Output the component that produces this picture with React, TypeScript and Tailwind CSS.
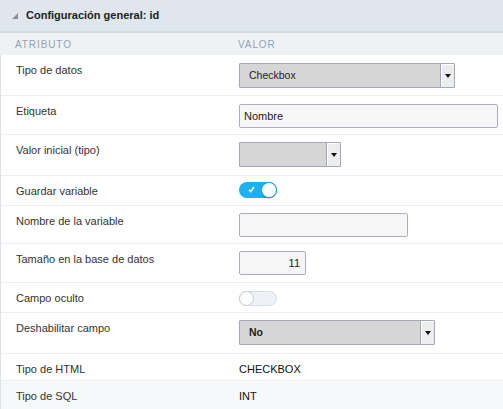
import React from "react";

const font = { fontFamily: '"Liberation Sans", Arial, sans-serif' };

function Select({ width, value, bold }: { width: number; value: string; bold?: boolean }) {
  return (
    <div
      className="flex h-[25px] border border-[#a2a9b5] bg-[#d6d6d6] rounded-[1px]"
      style={{ width }}
    >
      <div className={`flex-1 flex items-center pl-[9px] text-[10.5px] text-[#222] ${bold ? "font-bold" : ""}`}>
        {value}
      </div>
      <div className="w-[14px] border-l border-[#a2a9b5] bg-[#ededed] flex items-center justify-center shadow-[inset_1px_1px_0_#ffffff]">
        <div className="w-0 h-0 border-l-[3px] border-r-[3px] border-t-[4px] border-l-transparent border-r-transparent border-t-[#111]" />
      </div>
    </div>
  );
}

function Input({ width, value, right }: { width: number; value?: string; right?: boolean }) {
  return (
    <div
      className={`h-[24px] border border-[#a9b0bc] bg-[#f6f6f6] rounded-[2px] flex items-center text-[11px] text-[#222] ${right ? "justify-end pr-[5px]" : "pl-[4px]"}`}
      style={{ width }}
    >
      {value}
    </div>
  );
}

function Toggle({ on }: { on: boolean }) {
  if (on) {
    return (
      <div className="relative w-[38px] h-[16px] rounded-full bg-[#1eb0f0]">
        <svg className="absolute left-[9px] top-[4px]" width="7" height="7" viewBox="0 0 7 7">
          <path d="M1 3.8 L2.8 5.5 L6 1" stroke="#fff" strokeWidth="1.6" fill="none" />
        </svg>
        <div className="absolute right-0 top-0 w-[16px] h-[16px] rounded-full bg-white border border-[#1a9fe0] shadow-[0_1px_1px_rgba(0,0,0,0.15)]" />
      </div>
    );
  }
  return (
    <div className="relative w-[38px] h-[15px] rounded-full bg-[#eef1f5] border border-[#d6dce3]">
      <div className="absolute -left-[1px] -top-[1px] w-[15px] h-[15px] rounded-full bg-white border border-[#c4cbd4]" />
    </div>
  );
}

function Row({
  label,
  h,
  pt = 8,
  children,
  bg,
  last,
}: {
  label: string;
  h: number;
  pt?: number;
  children?: React.ReactNode;
  bg?: string;
  last?: boolean;
}) {
  return (
    <div
      className={`flex box-border ${last ? "" : "border-b border-[#eceff3]"} ${bg ?? "bg-white"}`}
      style={{ height: h }}
    >
      <div className="w-[238px] pl-[15px] pt-[8px] text-[11px] leading-[14px] text-[#333]">
        {label}
      </div>
      <div className="flex-1" style={{ paddingTop: pt }}>
        {children}
      </div>
    </div>
  );
}

export default function App() {
  return (
    <div className="w-[503px] h-[409px] overflow-hidden bg-white" style={font}>
      <div className="h-[33px] bg-[#dfe6ed] border-b-2 border-[#d2dae2] flex items-center pl-[12px] box-border">
        <div className="w-0 h-0 mr-[8px] mt-[1px] border-b-[6px] border-l-[6px] border-b-[#8b8f95] border-l-transparent" />
        <span className="text-[11px] font-bold text-[#222]">Configuración general: id</span>
      </div>
      <div className="h-[22px] bg-[#eef2f5] flex items-center text-[10px] tracking-[0.9px] text-[#8ea3b7]">
        <div className="w-[238px] pl-[15px]">ATRIBUTO</div>
        <div>VALOR</div>
      </div>
      <div className="border-l border-[#dde2e8]">
        <Row label="Tipo de datos" h={41} pt={8}>
          <Select width={216} value="Checkbox" />
        </Row>
        <Row label="Etiqueta" h={39} pt={8}>
          <Input width={259} value="Nombre" />
        </Row>
        <Row label="Valor inicial (tipo)" h={41} pt={7}>
          <Select width={102} value="" />
        </Row>
        <Row label="Guardar variable" h={30} pt={6}>
          <Toggle on />
        </Row>
        <Row label="Nombre de la variable" h={38} pt={7}>
          <Input width={169} />
        </Row>
        <Row label="Tamaño en la base de datos" h={39} pt={7}>
          <Input width={67} value="11" right />
        </Row>
        <Row label="Campo oculto" h={30} pt={8}>
          <Toggle on={false} />
        </Row>
        <Row label="Deshabilitar campo" h={41} pt={7}>
          <Select width={196} value="No" bold />
        </Row>
        <Row label="Tipo de HTML" h={27} pt={8}>
          <div className="text-[11px] leading-[14px] text-[#111]">CHECKBOX</div>
        </Row>
        <Row label="Tipo de SQL" h={28} pt={8} bg="bg-[#f7f8fa]" last>
          <div className="text-[11px] leading-[14px] text-[#111]">INT</div>
        </Row>
      </div>
    </div>
  );
}
